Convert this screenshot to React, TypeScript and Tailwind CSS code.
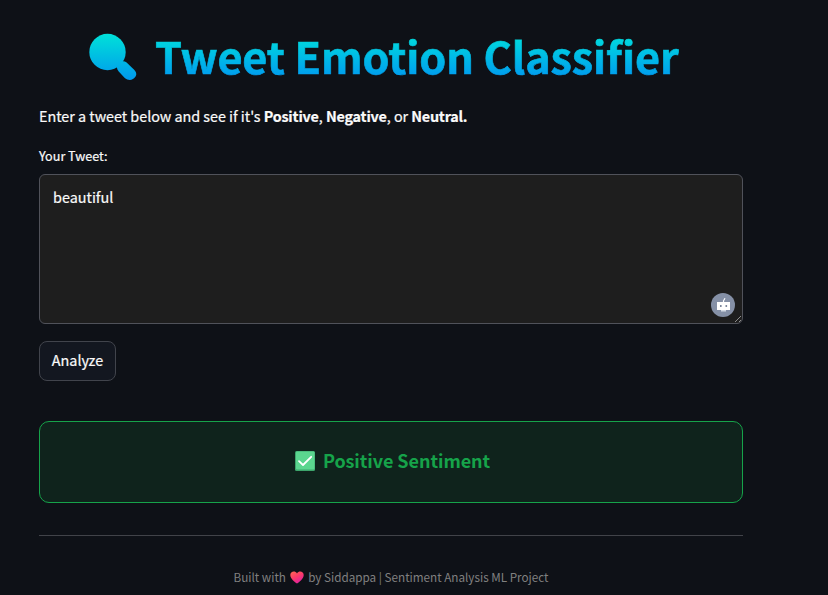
import React from "react";

function MagnifierIcon() {
  return (
    <svg width="48" height="58" viewBox="0 0 48 58" className="shrink-0">
      <defs>
        <linearGradient id="lens" x1="0" y1="0" x2="0" y2="58" gradientUnits="userSpaceOnUse">
          <stop offset="0" stopColor="#00ead6" />
          <stop offset="1" stopColor="#0090f0" />
        </linearGradient>
      </defs>
      <g fill="url(#lens)">
        <circle cx="18.5" cy="24" r="18.2" />
        <path d="M29.5 34.5L33 33.3Q35.5 32.8 37.6 34.6L45.4 42Q48.5 45.2 46.5 48.6Q43.5 53.2 38.2 51.6Q36.8 51.1 35.5 49.8L29.5 43.2Q27.6 40.9 28 38.5Z" />
      </g>
    </svg>
  );
}

function CheckIcon() {
  return (
    <svg width="20" height="20" viewBox="0 0 20 20" className="shrink-0">
      <rect width="20" height="20" rx="1.5" fill="#3da66c" />
      <rect x="1" y="0.5" width="18.5" height="18" rx="1" fill="#5bd68f" />
      <path d="M4 10.2L8 14L16.2 5.8" fill="none" stroke="#fff" strokeWidth="1.8" strokeLinecap="round" strokeLinejoin="round" />
    </svg>
  );
}

function HeartIcon() {
  return (
    <svg width="14" height="13" viewBox="0 0 14 13" className="mr-[2px] ml-px shrink-0">
      <defs>
        <linearGradient id="heart" x1="0" y1="0" x2="0.6" y2="1">
          <stop offset="0" stopColor="#ff6a55" />
          <stop offset="0.5" stopColor="#fb3c68" />
          <stop offset="1" stopColor="#e020a0" />
        </linearGradient>
      </defs>
      <path d="M7 12.6C5 11.4 0.3 7.8 0.3 4.1C0.3 0.2 5.2-0.6 7 2.5C8.8-0.6 13.7 0.2 13.7 4.1C13.7 7.8 9 11.4 7 12.6Z" fill="url(#heart)" />
    </svg>
  );
}

function RobotBadge() {
  return (
    <svg width="24" height="24" viewBox="0 0 24 24" className="absolute right-2 bottom-[7px]">
      <circle cx="12" cy="12" r="12" fill="#8590a6" />
      <path d="M12.5 9.5V7.8L14 5.2" fill="none" stroke="#fff" strokeWidth="1.2" />
      <rect x="6" y="9" width="13" height="8" fill="#fff" />
      <rect x="10" y="17" width="5" height="1.5" fill="#d5dbe5" />
      <rect x="9" y="12" width="1.6" height="2" fill="#7d879c" />
      <rect x="14.5" y="12" width="1.6" height="2" fill="#7d879c" />
    </svg>
  );
}

export default function App() {
  return (
    <div className="h-[595px] overflow-hidden bg-[#0e1117] pl-[39px] font-['Noto_Sans_CJK_SC','Noto_Sans',sans-serif] text-[#fafafa]">
      <main className="flex w-[704px] flex-col pt-[28px]">
        <h1 className="flex h-[58px] items-start pl-[49.5px]">
          <MagnifierIcon />
          <span className="-mt-[2px] ml-[18.5px] bg-linear-to-b from-[#00ead6] to-[#0090f0] bg-clip-text text-[43.2px] leading-[58px] font-bold tracking-[-0.12px] whitespace-nowrap text-transparent [-webkit-text-stroke:0.7px_transparent]">
            Tweet Emotion Classifier
          </span>
        </h1>
        <p className="mt-[18px] h-6 text-[14.4px] leading-6 tracking-[-0.04px] whitespace-nowrap [-webkit-text-stroke:0.2px]">
          Enter a tweet below and see if it's{" "}
          <b className="tracking-[-0.2px]">Positive</b>, <b className="tracking-[-0.2px]">Negative</b>, or{" "}
          <b className="tracking-[-0.25px]">Neutral.</b>
        </p>
        <label htmlFor="tweet" className="mt-[18px] h-5 text-[12.6px] leading-5 [-webkit-text-stroke:0.2px]">Your Tweet:</label>
        <div className="relative mt-2 h-[150px]">
          <textarea
            id="tweet"
            readOnly
            value="beautiful"
            className="block h-full w-full resize-none rounded-md border border-[#50525a] bg-[#1e1e1e] px-[13px] py-[10px] text-[14.4px] leading-6 outline-none [-webkit-text-stroke:0.2px]"
          />
          <RobotBadge />
          <svg width="8" height="8" viewBox="0 0 8 8" className="absolute right-[1px] bottom-[1px]">
            <path d="M1 7L7 1M5 7L7 5" stroke="#aaa" strokeWidth="0.8" />
          </svg>
        </div>
        <button className="mt-[17px] h-10 w-[77px] rounded-lg border border-[#41444c] bg-[#131720] pb-[2px] text-[14.4px] leading-6 [-webkit-text-stroke:0.2px]">
          Analyze
        </button>
        <section className="mt-10 flex h-[82px] items-center justify-center gap-2 rounded-[10px] border border-[#16a34a] bg-[#0f231c] pb-[3px] pl-[3px] text-[#16a34a]">
          <CheckIcon />
          <span className="pb-[2px] text-[18px] leading-8 font-bold tracking-[-0.05px]">Positive Sentiment</span>
        </section>
        <hr className="mt-8 border-t border-[#414349]" />
        <footer className="mt-[31px] flex h-5 items-center justify-center text-[11.7px] leading-5 whitespace-pre text-[#808080]">
          <span>Built with </span>
          <HeartIcon />
          <span> by Siddappa | Sentiment Analysis ML Project</span>
        </footer>
      </main>
    </div>
  );
}
